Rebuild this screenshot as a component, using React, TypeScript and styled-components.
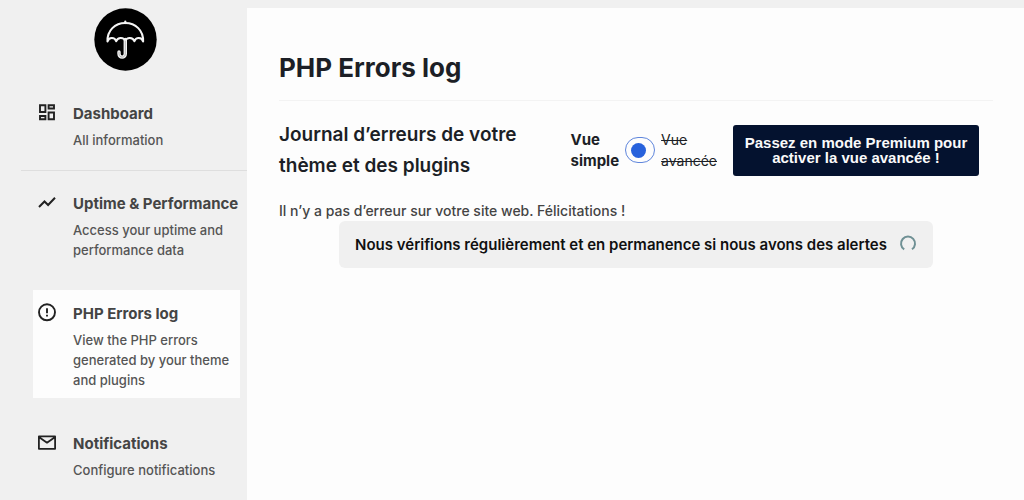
import React from "react";
import styled, { createGlobalStyle } from "styled-components";

const GlobalStyle = createGlobalStyle`
  *, *::before, *::after { box-sizing: border-box; }
  body {
    margin: 0;
    background: #f0f0f0;
    color: #1c1f26;
    font-family: Inter, "Liberation Sans", sans-serif;
    font-size: 14px;
    line-height: 20px;
  }
`;

const Page = styled.div`
  display: grid;
  grid-template-columns: 247px minmax(0, 1fr);
  min-height: 100vh;
  padding-top: 8px;
`;

const Sidebar = styled.aside`
  display: flex;
  flex-direction: column;
`;

const Logo = styled.a`
  align-self: center;
  display: flex;
  margin: 0 0 19px 4px;
  border-radius: 50%;
`;

const Nav = styled.nav`
  display: flex;
  flex-direction: column;
`;

const NavLink = styled.a<{ $active?: boolean }>`
  display: grid;
  grid-template-columns: 28px minmax(0, 1fr);
  column-gap: 12px;
  margin: 0 7px 22px 33px;
  padding: 13px 0 8px;
  background: ${(p) => (p.$active ? "#fdfdfd" : "transparent")};
  color: #444;
  text-decoration: none;

  svg {
    justify-self: center;
  }
`;

const NavText = styled.span`
  display: flex;
  flex-direction: column;
  gap: 6px;
  padding-top: 1px;
`;

const NavTitle = styled.strong`
  font-size: 15px;
  font-weight: 700;
  white-space: nowrap;
`;

const NavNote = styled.span`
  color: #555;
  font-size: 13px;
  font-weight: 500;
`;

const NavRule = styled.hr`
  width: auto;
  margin: -10px 0 9px 21px;
  border: 0;
  border-top: 1px solid #dedede;
`;

const Main = styled.main`
  padding: 40px 31px 40px 32px;
  background: #fdfdfd;
`;

const Title = styled.h1`
  margin: 0;
  padding-bottom: 12px;
  border-bottom: 1px solid #f3f3f3;
  font-size: 26px;
  font-weight: 700;
  line-height: 40px;
`;

const Toolbar = styled.div`
  display: flex;
  align-items: center;
  gap: 16px;
  padding: 18px 14px 20px 0;
`;

const Heading = styled.h2`
  flex: 1;
  margin: 0;
  font-size: 19px;
  font-weight: 600;
  line-height: 31px;

  span {
    display: block;
    max-width: 260px;
  }
`;

const ViewSwitch = styled.label`
  display: flex;
  align-items: center;
  gap: 6px;
  line-height: 21px;
`;

const ViewName = styled.span<{ $off?: boolean }>`
  width: min-content;
  font-size: ${(p) => (p.$off ? 14 : 15)}px;
  font-weight: ${(p) => (p.$off ? 400 : 700)};
  text-decoration: ${(p) => (p.$off ? "line-through" : "none")};
`;

const Toggle = styled.input`
  appearance: none;
  display: flex;
  align-items: center;
  width: 30px;
  height: 26px;
  margin: 0;
  padding: 0 5px;
  border: 1px solid #5f86dc;
  border-radius: 13px;
  background: #fdfdfd;

  &::before {
    content: "";
    width: 15px;
    height: 15px;
    border-radius: 50%;
    background: #2862dc;
  }
`;

const PremiumButton = styled.button`
  width: 246px;
  padding: 10px 8px 11px;
  border: 0;
  border-radius: 3px;
  background: #04122f;
  color: #fafafa;
  font: 700 15px/15px "Liberation Sans", Arial, sans-serif;
`;

const Message = styled.p`
  margin: 0;
  color: #444;
  font-weight: 500;
`;

const Notice = styled.div`
  display: flex;
  align-items: center;
  gap: 12px;
  width: fit-content;
  margin: 0 auto;
  padding: 14px 16px 13px;
  border-radius: 6px;
  background: #f0f0f0;
  color: #101010;
  font-size: 15px;
  font-weight: 600;
`;

function UmbrellaLogo() {
  return (
    <svg width="63" height="63" viewBox="0 0 63 63" fill="none" aria-hidden="true">
      <circle cx="31.5" cy="31.5" r="31.2" fill="#000" />
      <g stroke="#f4f4f4" strokeWidth="2.1" strokeLinecap="round" strokeLinejoin="round">
        <path d="M31.3 13.6v1.5" />
        <path d="M13.5 33.5C13 22.5 21 15 31.3 15S49.6 22.5 49.1 33.5c-1.3-4.6-7.2-4.6-8.7-.3-1.5-4.3-7.6-4.3-9.1-.3-1.5-4-7.6-4-9.1.3-1.5-4.3-7.4-4.3-8.7.3Z" />
        <path d="M31.3 31.5v14.2c0 4.600-6.300 4.600-6.300 0v-1.700" strokeWidth="3.4" />
        <path d="M31.3 33v12.700c0 4.600-6.300 4.600-6.300 0v-1.500" stroke="#999" strokeWidth="0.7" />
      </g>
    </svg>
  );
}

function DashboardIcon() {
  return (
    <svg width="18" height="20" viewBox="0 0 18 20" fill="none" stroke="#222" strokeWidth="1.9" aria-hidden="true">
      <path d="M2 2.300h5.400v6.700H2zM10.600 2.300H16v3.200h-5.400zM2 13h5.400v3.200H2zM10.600 9.500H16v6.700h-5.400z" />
    </svg>
  );
}

function TrendIcon() {
  return (
    <svg width="18" height="20" viewBox="0 0 18 20" fill="none" stroke="#222" strokeWidth="2" aria-hidden="true">
      <path d="M1 14l5.500-5.500 3.600 3.500L17 4.700" />
    </svg>
  );
}

function AlertIcon() {
  return (
    <svg width="20" height="20" viewBox="0 0 20 20" fill="none" stroke="#222" strokeWidth="1.9" aria-hidden="true">
      <circle cx="10" cy="9.300" r="8" />
      <path d="M10 5.300v5M10 11.700v1.800" />
    </svg>
  );
}

function MailIcon() {
  return (
    <svg width="20" height="20" viewBox="0 0 20 20" fill="none" stroke="#222" strokeWidth="1.8" strokeLinejoin="round" aria-hidden="true">
      <path d="M1.900 3.400h16.200v12.400H1.900zM2.200 4.300L10 9.700l7.800-5.400" />
    </svg>
  );
}

function Spinner() {
  return (
    <svg width="18" height="20" viewBox="0 0 18 20" fill="none" aria-hidden="true">
      <path d="M5.200 14.400A7 7 0 1 1 13 14.300" stroke="#6f9094" strokeWidth="2" />
    </svg>
  );
}

type Entry = {
  title: string;
  note: string;
  icon: React.ReactNode;
  active?: boolean;
  ruled?: boolean;
};

const entries: Entry[] = [
  { title: "Dashboard", note: "All information", icon: <DashboardIcon />, ruled: true },
  { title: "Uptime & Performance", note: "Access your uptime and performance data", icon: <TrendIcon /> },
  {
    title: "PHP Errors log",
    note: "View the PHP errors generated by your theme and plugins",
    icon: <AlertIcon />,
    active: true,
  },
  { title: "Notifications", note: "Configure notifications", icon: <MailIcon /> },
];

export default function App() {
  return (
    <>
      <GlobalStyle />
      <Page>
        <Sidebar>
          <Logo href="#" aria-label="Home">
            <UmbrellaLogo />
          </Logo>
          <Nav>
            {entries.map((e) => (
              <React.Fragment key={e.title}>
                <NavLink href="#" $active={e.active} aria-current={e.active ? "page" : undefined}>
                  {e.icon}
                  <NavText>
                    <NavTitle>{e.title}</NavTitle>
                    <NavNote>{e.note}</NavNote>
                  </NavText>
                </NavLink>
                {e.ruled && <NavRule />}
              </React.Fragment>
            ))}
          </Nav>
        </Sidebar>
        <Main>
          <Title>PHP Errors log</Title>
          <Toolbar>
            <Heading>
              <span>Journal d’erreurs de votre thème et des plugins</span>
            </Heading>
            <ViewSwitch>
              <ViewName>Vue simple</ViewName>
              <Toggle type="checkbox" role="switch" />
              <ViewName $off>Vue avancée</ViewName>
            </ViewSwitch>
            <PremiumButton type="button">Passez en mode Premium pour activer la vue avancée !</PremiumButton>
          </Toolbar>
          <Message>Il n’y a pas d’erreur sur votre site web. Félicitations !</Message>
          <Notice role="status">
            Nous vérifions régulièrement et en permanence si nous avons des alertes
            <Spinner />
          </Notice>
        </Main>
      </Page>
    </>
  );
}
